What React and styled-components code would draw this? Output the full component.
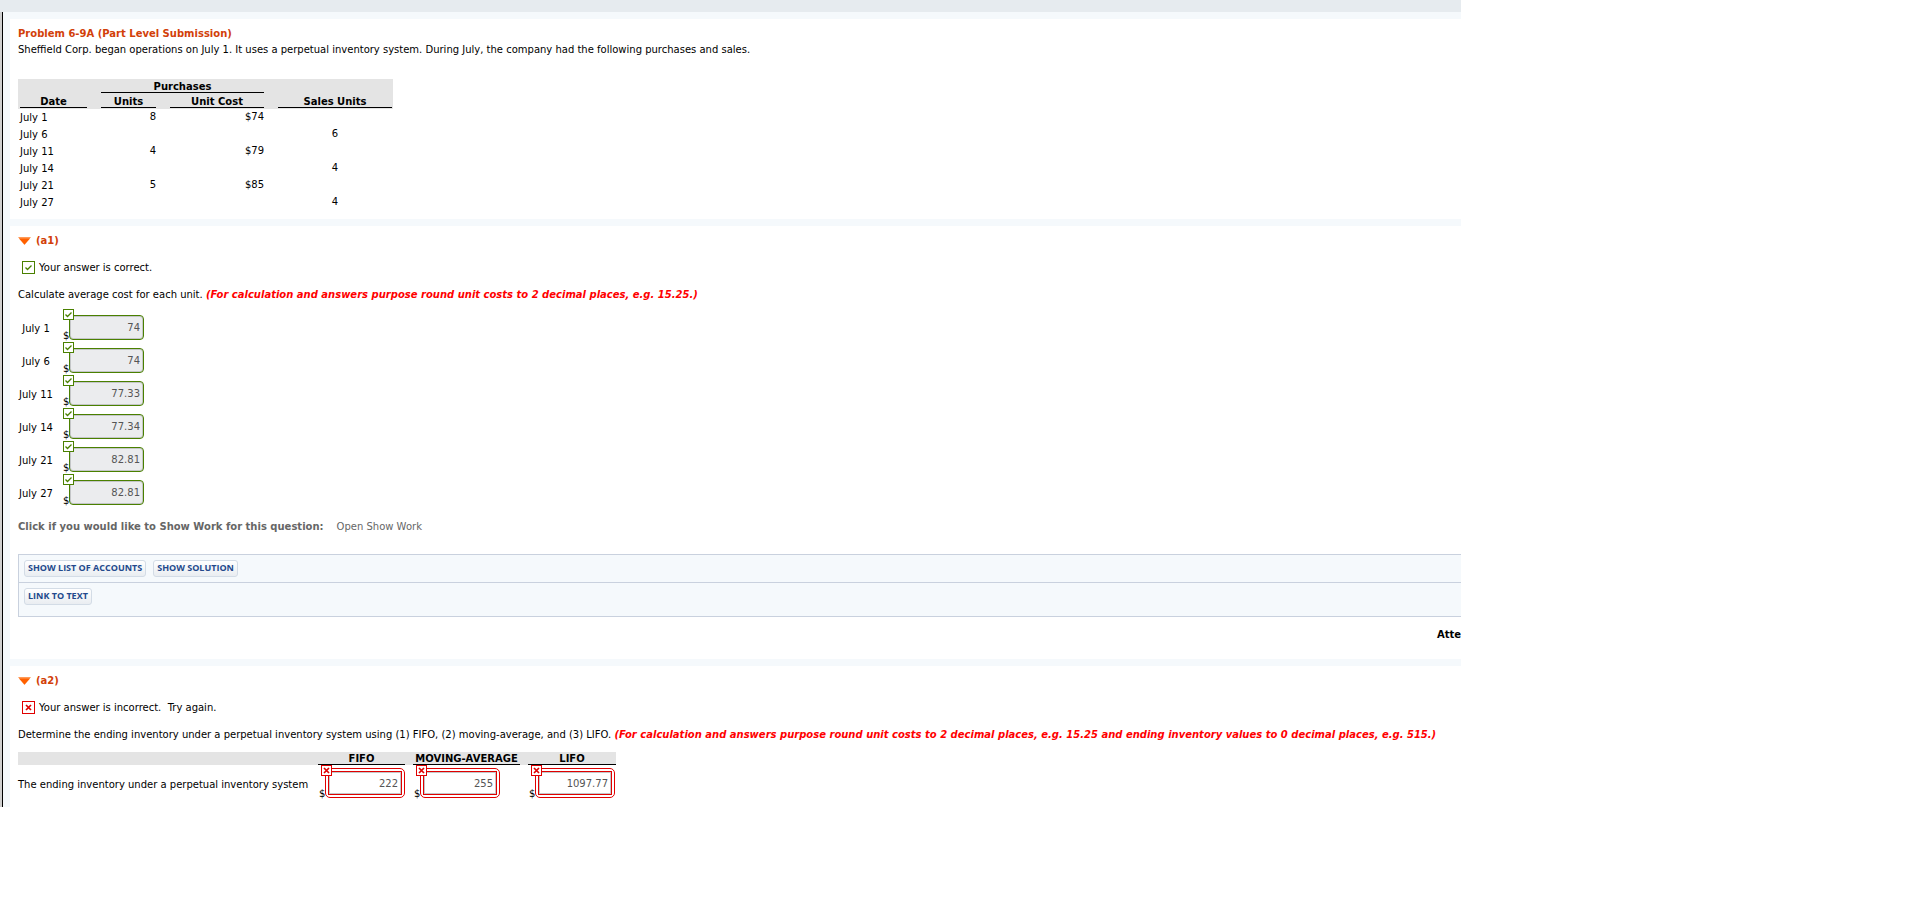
import React from "react";
import styled, { createGlobalStyle } from "styled-components";

const themeVars = {
  page: "#f5f9fc",
  topBar: "#e6ebef",
  orange: "#d24009",
  green: "#4a8000",
  red: "#e00000",
  note: "#ff0000",
  headGrey: "#e4e4e4",
  border: "#c9d1de",
  blue: "#23498c",
};

const purchases = [
  { date: "July 1", units: "8", cost: "$74", sales: "" },
  { date: "July 6", units: "", cost: "", sales: "6" },
  { date: "July 11", units: "4", cost: "$79", sales: "" },
  { date: "July 14", units: "", cost: "", sales: "4" },
  { date: "July 21", units: "5", cost: "$85", sales: "" },
  { date: "July 27", units: "", cost: "", sales: "4" },
];

const averageCosts = [
  { date: "July 1", value: "74" },
  { date: "July 6", value: "74" },
  { date: "July 11", value: "77.33" },
  { date: "July 14", value: "77.34" },
  { date: "July 21", value: "82.81" },
  { date: "July 27", value: "82.81" },
];

const inventory = [
  { method: "FIFO", value: "222" },
  { method: "MOVING-AVERAGE", value: "255" },
  { method: "LIFO", value: "1097.77" },
];

// the box is drawn at its real size so that its outline stays one pixel wide
const Mark = ({ correct, size }) => {
  const color = correct ? themeVars.green : themeVars.red;
  const middle = size / 2;
  return (
    <MarkSvg viewBox={`0 0 ${size} ${size}`} $size={size} aria-hidden="true">
      <rect
        x="0.5"
        y="0.5"
        width={size - 1}
        height={size - 1}
        fill="#fff"
        stroke={color}
      />
      <g transform={`translate(${middle} ${middle})`} fill="none" stroke={color}>
        {correct ? (
          <path d="M-3 0 L-1 2 L3 -2" strokeWidth="1.3" />
        ) : (
          <path d="M-2.5 -2.5 L2.5 2.5 M2.5 -2.5 L-2.5 2.5" strokeWidth="1.7" />
        )}
      </g>
    </MarkSvg>
  );
};

const PartHeading = ({ children }) => (
  <PartTitle>
    <svg width="13" height="8" viewBox="0 0 13 8" aria-hidden="true">
      <path d="M0 0 H13 L6.5 8 Z" fill="#ff9a57" />
      <path d="M1 1.5 H12 L6.5 7.5 Z" fill="#ff6000" />
    </svg>
    {children}
  </PartTitle>
);

const CorrectAnswer = ({ id, value }) => (
  <Answer>
    <Dollar>$</Dollar>
    <InputBox>
      <CorrectInput id={id} defaultValue={value} readOnly />
      <Badge>
        <Mark correct size={11} />
      </Badge>
    </InputBox>
  </Answer>
);

const WrongAnswer = ({ label, value }) => (
  <Answer>
    <Dollar>$</Dollar>
    <InputBox>
      <WrongFrame>
        <WrongInput aria-label={label} defaultValue={value} />
      </WrongFrame>
      <Badge $wrong>
        <Mark size={11} />
      </Badge>
    </InputBox>
  </Answer>
);

const App = () => {
  return (
    <>
      <GlobalStyle />
      <Page>
        <TopBar />
        <Content>
          <Panel>
            <Title>Problem 6-9A (Part Level Submission)</Title>
            <Intro>
              Sheffield Corp. began operations on July 1. It uses a perpetual
              inventory system. During July, the company had the following
              purchases and sales.
            </Intro>
            <PurchaseTable>
              <colgroup>
                <Col $width={76} />
                <Col $width={69} />
                <Col $width={108} />
                <Col $width={122} />
              </colgroup>
              <thead>
                <tr>
                  <HeadCell />
                  <HeadCell colSpan={2}>
                    <Rule>Purchases</Rule>
                  </HeadCell>
                  <HeadCell />
                </tr>
                <tr>
                  <HeadCell>
                    <Rule>Date</Rule>
                  </HeadCell>
                  <HeadCell>
                    <Rule>Units</Rule>
                  </HeadCell>
                  <HeadCell>
                    <Rule>Unit Cost</Rule>
                  </HeadCell>
                  <HeadCell>
                    <Rule>Sales Units</Rule>
                  </HeadCell>
                </tr>
              </thead>
              <tbody>
                {purchases.map((row) => (
                  <tr key={row.date}>
                    <DateCell>{row.date}</DateCell>
                    <NumberCell>{row.units}</NumberCell>
                    <NumberCell>{row.cost}</NumberCell>
                    <NumberCell $center>{row.sales}</NumberCell>
                  </tr>
                ))}
              </tbody>
            </PurchaseTable>
          </Panel>

          <Panel>
            <PartHeading>(a1)</PartHeading>
            <Status>
              <Mark correct size={13} />
              Your answer is correct.
            </Status>
            <Question>
              Calculate average cost for each unit.{" "}
              <Note>
                (For calculation and answers purpose round unit costs to 2
                decimal places, e.g. 15.25.)
              </Note>
            </Question>
            <AnswerList>
              {averageCosts.map((row, index) => (
                <AnswerRow key={row.date}>
                  <AnswerLabel htmlFor={`cost-${index}`}>{row.date}</AnswerLabel>
                  <CorrectAnswer id={`cost-${index}`} value={row.value} />
                </AnswerRow>
              ))}
            </AnswerList>
            <ShowWork>
              <strong>Click if you would like to Show Work for this question:</strong>
              <WorkLink href="#work">Open Show Work</WorkLink>
            </ShowWork>
            <Tools>
              <ToolRow>
                <ToolButton type="button">SHOW LIST OF ACCOUNTS</ToolButton>
                <ToolButton type="button">SHOW SOLUTION</ToolButton>
              </ToolRow>
              <ToolRow $last>
                <ToolButton type="button">LINK TO TEXT</ToolButton>
              </ToolRow>
            </Tools>
            <Attempts>Atte</Attempts>
          </Panel>

          <Panel>
            <PartHeading>(a2)</PartHeading>
            <Status>
              <Mark size={13} />
              Your answer is incorrect.&nbsp; Try again.
            </Status>
            <Question>
              Determine the ending inventory under a perpetual inventory system
              using (1) FIFO, (2) moving-average, and (3) LIFO.{" "}
              <Note>
                (For calculation and answers purpose round unit costs to 2
                decimal places, e.g. 15.25 and ending inventory values to 0
                decimal places, e.g. 515.)
              </Note>
            </Question>
            <InventoryTable>
              <colgroup>
                <Col $width={296} />
                <Col $width={95} />
                <Col $width={115} />
                <Col $width={92} />
              </colgroup>
              <thead>
                <tr>
                  <MethodHead />
                  {inventory.map((item) => (
                    <MethodHead key={item.method}>
                      <Rule>{item.method}</Rule>
                    </MethodHead>
                  ))}
                </tr>
              </thead>
              <tbody>
                <tr>
                  <RowLabel>The ending inventory under a perpetual inventory system</RowLabel>
                  {inventory.map((item) => (
                    <ValueCell key={item.method}>
                      <WrongAnswer label={item.method} value={item.value} />
                    </ValueCell>
                  ))}
                </tr>
              </tbody>
            </InventoryTable>
          </Panel>
        </Content>
      </Page>
    </>
  );
};

const GlobalStyle = createGlobalStyle`
  * {
    box-sizing: border-box;
  }
  body {
    margin: 0;
    background: #fff;
    color: #000;
    font-family: Verdana, "DejaVu Sans", sans-serif;
    font-size: 10px;
    line-height: 16px;
  }
`;
const Page = styled.main`
  margin-right: 453px;
`;
const TopBar = styled.header`
  height: 12px;
  background: ${themeVars.topBar};
`;
const Content = styled.div`
  display: flex;
  flex-direction: column;
  gap: 7px;
  margin-left: 2px;
  padding: 7px 0 0 7px;
  border-left: 1px solid #000;
  background: ${themeVars.page};
  box-shadow: -2px 0 0 #cfcfcf;
`;
const Panel = styled.section`
  padding: 7px 0 8px 8px;
  background: #fff;
  white-space: nowrap;
`;
const Title = styled.h1`
  margin: 0;
  color: ${themeVars.orange};
  font-size: 10px;
`;
const Intro = styled.p`
  margin: 0 0 21px;
`;
const Col = styled.col`
  width: ${({ $width }) => $width}px;
`;
const PurchaseTable = styled.table`
  width: 375px;
  table-layout: fixed;
  border-spacing: 0;
`;
const HeadCell = styled.th`
  padding: 2px 7px 0;
  background: ${themeVars.headGrey};
  &:first-child {
    padding-left: 2px;
  }
  &:last-child {
    padding-right: 1px;
  }
  tr:last-child > & {
    padding-top: 3px;
    padding-bottom: 1px;
  }
`;
const Rule = styled.div`
  border-bottom: 1px solid #000;
  line-height: 11px;
`;
const DateCell = styled.td`
  padding: 1px 7px 0 2px;
`;
const NumberCell = styled.td`
  padding: 0 7px 1px;
  text-align: ${({ $center }) => ($center ? "center" : "right")};
  &:last-child {
    padding-right: 1px;
  }
`;
const PartTitle = styled.h2`
  display: flex;
  align-items: center;
  gap: 5px;
  margin: 0;
  color: ${themeVars.orange};
  font-size: 10px;
`;
const Status = styled.p`
  display: flex;
  align-items: center;
  gap: 4px;
  margin: 11px 0 12px 4px;
  line-height: 15px;
`;
const MarkSvg = styled.svg`
  display: block;
  flex: none;
  width: ${({ $size }) => $size}px;
  height: ${({ $size }) => $size}px;
`;
const Question = styled.p`
  margin: 0;
`;
const Note = styled.strong`
  color: ${themeVars.note};
  font-style: italic;
`;
const AnswerList = styled.div`
  display: flex;
  flex-direction: column;
  gap: 8px;
  margin: 12px 0 14px;
`;
const AnswerRow = styled.div`
  display: flex;
  align-items: center;
  gap: 9px;
`;
const AnswerLabel = styled.label`
  width: 36px;
  padding-top: 2px;
  text-align: center;
`;
const Answer = styled.div`
  display: flex;
  align-items: flex-end;
`;
const Dollar = styled.span`
  width: 6px;
  line-height: 9px;
`;
const InputBox = styled.div`
  position: relative;
`;
const Badge = styled.span`
  position: absolute;
  top: ${({ $wrong }) => ($wrong ? -3 : -6)}px;
  left: ${({ $wrong }) => ($wrong ? -4 : -6)}px;
`;
const Input = styled.input`
  display: block;
  color: #555;
  font-family: inherit;
  font-size: 10px;
  text-align: right;
`;
const CorrectInput = styled(Input)`
  width: 75px;
  height: 25px;
  padding: 0 3px 0 0;
  border: 1px solid ${themeVars.green};
  border-radius: 4px;
  background: #ebecee;
  box-shadow: inset 0 0 0 1px #c4c6c8;
`;
const WrongFrame = styled.div`
  padding: 2px;
  border: 1px solid ${themeVars.red};
  border-radius: 5px;
`;
const WrongInput = styled(Input)`
  width: 74px;
  height: 24px;
  padding: 0 3px 0 0;
  border: 1px solid ${themeVars.red};
  border-radius: 0;
  background: #fff;
  box-shadow: inset 0 0 0 1px #c4c6c8;
`;
const ShowWork = styled.p`
  display: flex;
  gap: 13px;
  margin: 0 0 19px;
  color: #666;
`;
const WorkLink = styled.a`
  color: #666;
  text-decoration: none;
`;
const Tools = styled.div`
  border: 1px solid ${themeVars.border};
  border-right: 0;
  background: ${themeVars.page};
`;
const ToolRow = styled.div`
  display: flex;
  gap: 7px;
  padding: 5px 5px ${({ $last }) => ($last ? 11 : 5)}px;
  & + & {
    border-top: 1px solid ${themeVars.border};
  }
`;
const ToolButton = styled.button`
  height: 17px;
  padding: 0 3px 2px;
  border: 1px solid #d3dce6;
  border-radius: 3px;
  background: linear-gradient(#fff, #e9edf1);
  color: ${themeVars.blue};
  font-family: Tahoma, "Open Sans", sans-serif;
  font-size: 9px;
  font-weight: 700;
  line-height: 13px;
`;
const Attempts = styled.p`
  margin: 10px 0 8px;
  font-weight: 700;
  text-align: right;
`;
const InventoryTable = styled.table`
  width: 598px;
  table-layout: fixed;
  border-spacing: 0;
  margin-top: 9px;
`;
const MethodHead = styled.th`
  padding: 1px 4px 0 0;
  background: ${themeVars.headGrey};
  &:nth-child(n + 2) {
    padding-left: 4px;
  }
  &:last-child {
    padding-right: 0;
  }
`;
const RowLabel = styled.td`
  padding: 5px 0 0;
`;
const ValueCell = styled.td`
  padding: 3px 0 1px 5px;
`;

export default App;
